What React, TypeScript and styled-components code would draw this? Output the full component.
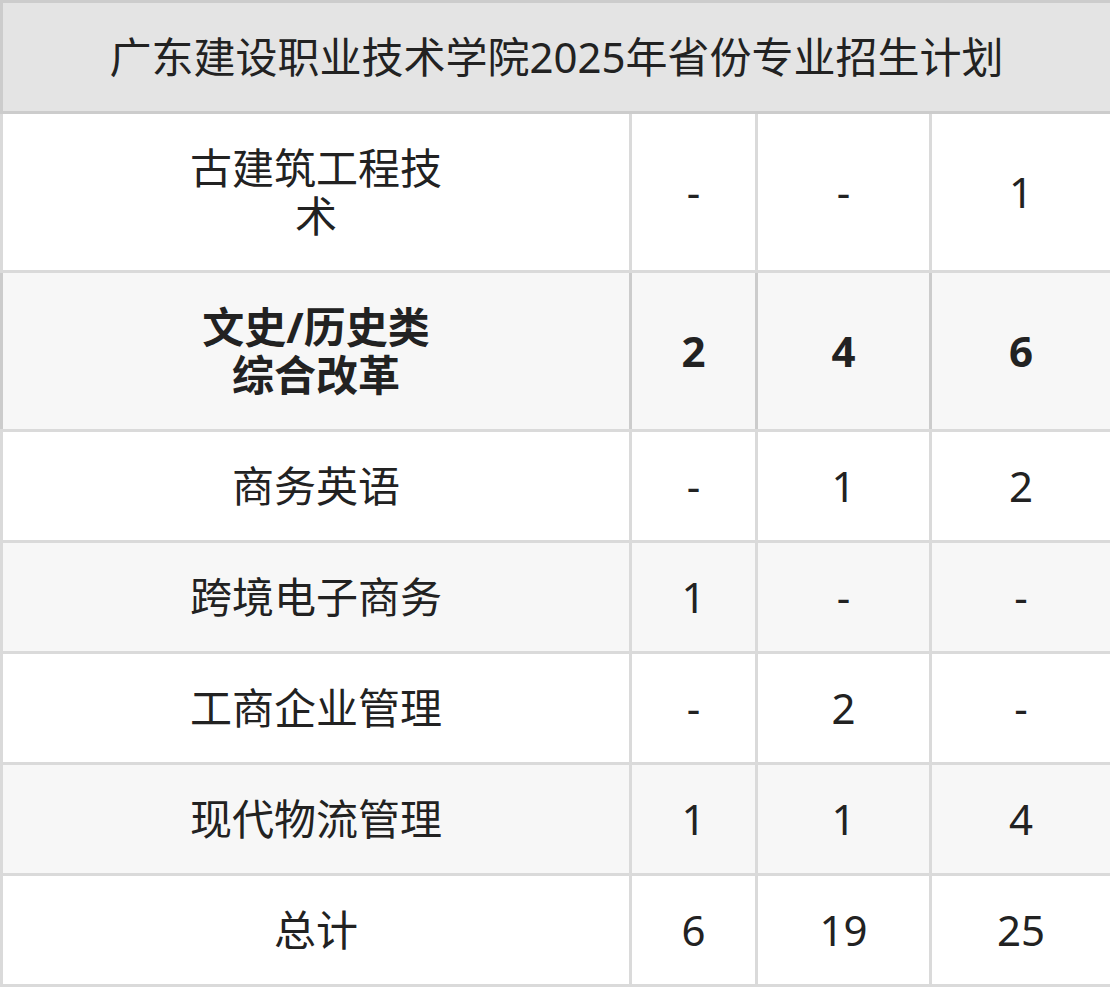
import React from 'react'
import styled, { createGlobalStyle } from 'styled-components'

const GlobalStyle = createGlobalStyle`
  body {
    margin: 0;
    background: #ffffff;
    font-family: "Noto Sans", "Noto Sans CJK SC", sans-serif;
  }
`

const StyledTable = styled.table`
  width: 1110px;
  border-collapse: collapse;
  table-layout: fixed;
  color: #222222;
  font-size: 42px;
  line-height: 48px;

  th, td {
    padding: 30px 0;
    text-align: center;
    vertical-align: middle;
    border: solid 3px #dadada;
  }

  th {
    background: #e4e4e4;
    border-color: #cccccc;
    font-weight: 400;
  }
`

const Col = styled.col<{ $width: number }>`
  width: ${({ $width }) => $width}px;
`

const Row = styled.tr<{ $shade?: boolean; $bold?: boolean }>`
  background: ${({ $shade }) => ($shade ? '#f7f7f7' : '#ffffff')};
  font-weight: ${({ $bold }) => ($bold ? 700 : 400)};

  td {
    ${({ $bold }) => ($bold ? 'border-left-color: #cccccc; border-right-color: #cccccc;' : '')}
  }
`

const Label = styled.span`
  display: inline-block;
  max-width: 262px;
`

const columns = [629, 126, 174, 181]

const rows = [
  { name: '古建筑工程技术', values: ['-', '-', '1'] },
  { name: '文史/历史类综合改革', values: ['2', '4', '6'], bold: true },
  { name: '商务英语', values: ['-', '1', '2'] },
  { name: '跨境电子商务', values: ['1', '-', '-'] },
  { name: '工商企业管理', values: ['-', '2', '-'] },
  { name: '现代物流管理', values: ['1', '1', '4'] },
  { name: '总计', values: ['6', '19', '25'] },
]

const App = () => {
  return (
    <>
      <GlobalStyle />
      <StyledTable>
        <colgroup>
          {columns.map((w, i) => (
            <Col key={i} $width={w} />
          ))}
        </colgroup>
        <thead>
          <tr>
            <th colSpan={4}>广东建设职业技术学院2025年省份专业招生计划</th>
          </tr>
        </thead>
        <tbody>
          {rows.map((row, i) => (
            <Row key={row.name} $shade={i % 2 === 1} $bold={row.bold}>
              <td><Label>{row.name}</Label></td>
              {row.values.map((v, j) => (
                <td key={j}>{v}</td>
              ))}
            </Row>
          ))}
        </tbody>
      </StyledTable>
    </>
  )
}

export default App
